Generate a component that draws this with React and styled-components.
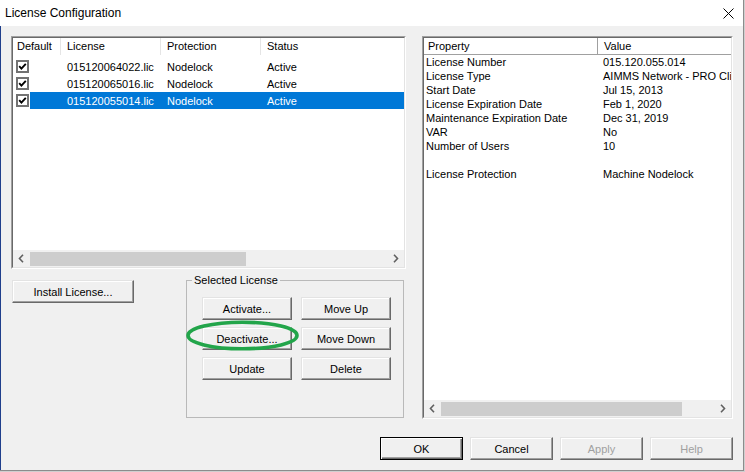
import React from 'react';
import styled, { createGlobalStyle, css } from 'styled-components';

const Global = createGlobalStyle`
  html, body { margin: 0; padding: 0; background: #cfcfcf; }
  body { font-family: "Liberation Sans", Arial, sans-serif; font-size: 11px; color: #000; }
  #root { width: 745px; height: 472px; overflow: hidden; }
`;

const Window = styled.div`
  width: 744px;
  height: 471px;
  box-sizing: border-box;
  display: flex;
  flex-direction: column;
  background: #f0f0f0;
  border-right: 1px solid #8c8c8c;
  border-bottom: 1px solid #8c8c8c;
`;

const TitleBar = styled.div`
  height: 26px;
  flex: none;
  background: #fff;
  display: flex;
  align-items: center;
  justify-content: space-between;
  padding: 0 9px 0 5px;
  font-size: 12px;
`;

const Content = styled.div`
  flex: 1;
  display: flex;
  flex-direction: column;
  padding: 10px;
  border-left: 1px solid #1f3f8c;
`;

const Main = styled.div`
  display: flex;
  gap: 16px;
  height: 383px;
`;

const LeftCol = styled.div`
  width: 395px;
  display: flex;
  flex-direction: column;
`;

const Sunken = styled.div`
  box-sizing: border-box;
  width: ${p => p.$w}px;
  height: ${p => p.$h}px;
  border: 1px solid;
  border-color: #a0a0a0 #ffffff #ffffff #a0a0a0;
  display: flex;
  flex-direction: column;
`;

const SunkenInner = styled.div`
  flex: 1;
  min-height: 0;
  border: 1px solid;
  border-color: #696969 #e3e3e3 #e3e3e3 #696969;
  background: #fff;
  display: flex;
  flex-direction: column;
  overflow: hidden;
`;

const ListHeader = styled.div`
  display: flex;
  height: 17px;
  flex: none;
`;

const HeadCell = styled.div`
  box-sizing: border-box;
  width: ${p => (p.$w ? `${p.$w}px` : 'auto')};
  flex: ${p => (p.$w ? 'none' : '1')};
  padding-left: ${p => p.$pad}px;
  line-height: 17px;
  border-right: ${p => (p.$w ? `1px solid ${p.$line}` : 'none')};
  white-space: nowrap;
`;

const Rows = styled.div`
  padding-top: ${p => p.$top}px;
  flex: 1;
`;

const ListRow = styled.div`
  display: flex;
  align-items: center;
  height: 17px;
`;

const CheckCell = styled.div`
  width: 17px;
  box-sizing: border-box;
  padding-left: 3px;
  display: flex;
  align-items: center;
`;

const RowBody = styled.div`
  flex: 1;
  display: flex;
  height: 17px;
  align-items: center;
  background: ${p => (p.$sel ? '#0078d7' : 'transparent')};
  color: ${p => (p.$sel ? '#fff' : '#000')};
`;

const Spacer = styled.div`
  width: ${p => p.$w}px;
  flex: none;
`;

const Cell = styled.div`
  width: ${p => (p.$w ? `${p.$w}px` : 'auto')};
  flex: ${p => (p.$w ? 'none' : '1')};
  box-sizing: border-box;
  padding-left: ${p => p.$pad}px;
  white-space: nowrap;
  overflow: hidden;
`;

const HScroll = styled.div`
  height: 17px;
  flex: none;
  display: flex;
  background: #f0f0f0;
`;

const ArrowBtn = styled.div`
  width: 17px;
  height: 17px;
  flex: none;
  display: flex;
  align-items: center;
  justify-content: center;
`;

const Track = styled.div`
  flex: 1;
  display: flex;
`;

const Thumb = styled.div`
  width: ${p => p.$w}px;
  margin: 2px 0 1px 0;
  background: #cdcdcd;
`;

const BelowRow = styled.div`
  display: flex;
  align-items: flex-start;
  margin-top: 5px;
`;

const Button = styled.button`
  box-sizing: border-box;
  width: ${p => p.$w}px;
  height: 23px;
  padding: 0;
  font-family: "Liberation Sans", Arial, sans-serif;
  font-size: 11px;
  color: #000;
  background: #f0f0f0;
  border: 1px solid;
  border-color: #e3e3e3 #696969 #696969 #e3e3e3;
  box-shadow: inset -1px -1px 0 #a0a0a0, inset 1px 1px 0 #ffffff;
  ${p =>
    p.$default &&
    css`
      border-color: #000;
      box-shadow: inset 1px 1px 0 #ffffff, inset -1px -1px 0 #696969, inset -2px -2px 0 #a0a0a0;
    `}
  &:disabled {
    color: #a0a0a0;
  }
`;

const InstallButton = styled(Button)`
  margin: 6px 0 0 1px;
`;

const GroupBox = styled.fieldset`
  box-sizing: border-box;
  margin: 0 2px 0 auto;
  width: 218px;
  height: 144px;
  padding: 0 12px 0 5px;
  border: 1px solid #b9b9b9;
  min-width: 0;
`;

const Legend = styled.legend`
  padding: 0 2px;
  font-size: 11px;
  line-height: 13px;
`;

const ButtonGrid = styled.div`
  position: relative;
  display: grid;
  grid-template-columns: 90px 90px;
  column-gap: 9px;
  row-gap: 7px;
  margin: 10px 0 0 10px;
`;

const Annotation = styled.svg`
  position: absolute;
  left: -16px;
  top: 23px;
  pointer-events: none;
`;

const PropHeader = styled.div`
  display: flex;
  height: 17px;
  flex: none;
  box-sizing: border-box;
  border-bottom: 1px solid #a0a0a0;
`;

const PropRows = styled.div`
  flex: 1;
`;

const PropRow = styled.div`
  display: flex;
  height: 14px;
  line-height: 14px;
`;

const Footer = styled.div`
  display: flex;
  justify-content: flex-end;
  gap: 7px;
  margin-top: 18px;
`;

const CloseIcon = () => (
  <svg width="11" height="11" viewBox="0 0 11 11">
    <path d="M0.5 0.5 L10.5 10.5 M10.5 0.5 L0.5 10.5" stroke="#000" strokeWidth="1" fill="none" />
  </svg>
);

const CheckBox = () => (
  <svg width="13" height="13" viewBox="0 0 13 13">
    <rect x="1" y="1" width="11" height="11" fill="#fff" stroke="#727272" strokeWidth="2" />
    <polyline points="3.2,6.2 5.4,8.6 9.8,3.8" fill="none" stroke="#000" strokeWidth="1.9" />
  </svg>
);

const Chevron = ({ dir }) => (
  <svg width="17" height="17" viewBox="0 0 17 17">
    <polyline
      points={dir === 'left' ? '10,4.8 6.5,8.5 10,12.2' : '7,4.8 10.5,8.5 7,12.2'}
      fill="none"
      stroke="#606060"
      strokeWidth="1.6"
    />
  </svg>
);

const ScrollBar = ({ thumb }) => (
  <HScroll>
    <ArrowBtn>
      <Chevron dir="left" />
    </ArrowBtn>
    <Track>
      <Thumb $w={thumb} />
    </Track>
    <ArrowBtn>
      <Chevron dir="right" />
    </ArrowBtn>
  </HScroll>
);

const licenses = [
  { file: '015120064022.lic', prot: 'Nodelock', status: 'Active' },
  { file: '015120065016.lic', prot: 'Nodelock', status: 'Active' },
  { file: '015120055014.lic', prot: 'Nodelock', status: 'Active', sel: true },
];

const props = [
  ['License Number', '015.120.055.014'],
  ['License Type', 'AIMMS Network - PRO Client'],
  ['Start Date', 'Jul 15, 2013'],
  ['License Expiration Date', 'Feb 1, 2020'],
  ['Maintenance Expiration Date', 'Dec 31, 2019'],
  ['VAR', 'No'],
  ['Number of Users', '10'],
  ['', ''],
  ['License Protection', 'Machine Nodelock'],
];

export default function App() {
  return (
    <>
      <Global />
      <Window>
        <TitleBar>
          <span>License Configuration</span>
          <CloseIcon />
        </TitleBar>
        <Content>
          <Main>
            <LeftCol>
              <Sunken $w={395} $h={233}>
                <SunkenInner>
                  <ListHeader>
                    <HeadCell $w={48} $pad={4} $line="#e5e5e5">Default</HeadCell>
                    <HeadCell $w={100} $pad={6} $line="#e5e5e5">License</HeadCell>
                    <HeadCell $w={100} $pad={6} $line="#e5e5e5">Protection</HeadCell>
                    <HeadCell $pad={6}>Status</HeadCell>
                  </ListHeader>
                  <Rows $top={3}>
                    {licenses.map(l => (
                      <ListRow key={l.file}>
                        <CheckCell>
                          <CheckBox />
                        </CheckCell>
                        <RowBody $sel={l.sel}>
                          <Spacer $w={31} />
                          <Cell $w={100} $pad={6}>{l.file}</Cell>
                          <Cell $w={100} $pad={6}>{l.prot}</Cell>
                          <Cell $pad={6}>{l.status}</Cell>
                        </RowBody>
                      </ListRow>
                    ))}
                  </Rows>
                  <ScrollBar thumb={216} />
                </SunkenInner>
              </Sunken>
              <BelowRow>
                <InstallButton $w={122}>Install License...</InstallButton>
                <GroupBox>
                  <Legend>Selected License</Legend>
                  <ButtonGrid>
                    <Button $w={90}>Activate...</Button>
                    <Button $w={90}>Move Up</Button>
                    <Button $w={90}>Deactivate...</Button>
                    <Button $w={90}>Move Down</Button>
                    <Button $w={90}>Update</Button>
                    <Button $w={90}>Delete</Button>
                    <Annotation width="113" height="31" viewBox="0 0 113 31">
                      <ellipse cx="56.5" cy="15.5" rx="54.5" ry="13.3" fill="none" stroke="#22a54a" strokeWidth="3.6" />
                    </Annotation>
                  </ButtonGrid>
                </GroupBox>
              </BelowRow>
            </LeftCol>
            <Sunken $w={311} $h={383}>
              <SunkenInner>
                <PropHeader>
                  <HeadCell $w={174} $pad={4} $line="#a0a0a0">Property</HeadCell>
                  <HeadCell $pad={6}>Value</HeadCell>
                </PropHeader>
                <PropRows>
                  {props.map(([k, v], i) => (
                    <PropRow key={i}>
                      <Cell $w={174} $pad={2}>{k}</Cell>
                      <Cell $pad={5}>{v}</Cell>
                    </PropRow>
                  ))}
                </PropRows>
                <ScrollBar thumb={241} />
              </SunkenInner>
            </Sunken>
          </Main>
          <Footer>
            <Button $w={83} $default>OK</Button>
            <Button $w={83}>Cancel</Button>
            <Button $w={83} disabled>Apply</Button>
            <Button $w={83} disabled>Help</Button>
          </Footer>
        </Content>
      </Window>
    </>
  );
}
